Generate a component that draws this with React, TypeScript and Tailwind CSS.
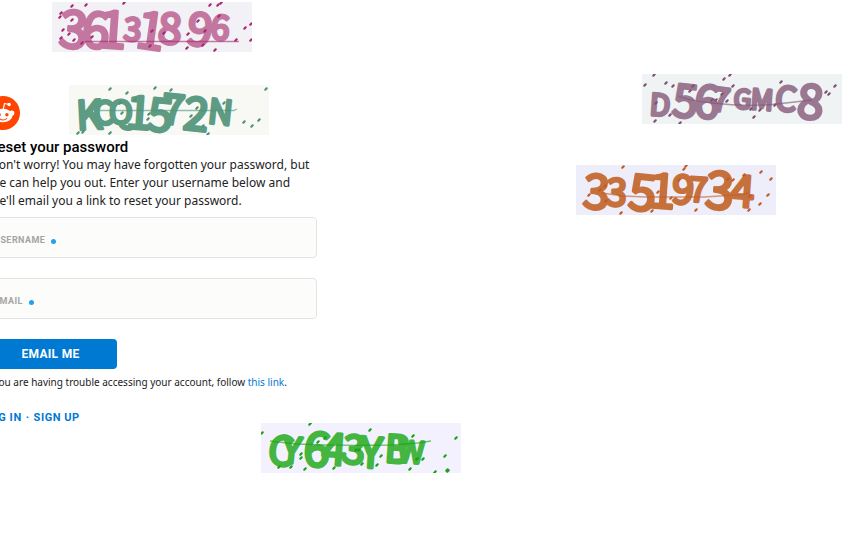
import React from "react";

type Glyph = [char: string, x: number, baseline: number, size: number, lean?: number];

interface ScribbleProps {
  label: string;
  place: string;
  background: string;
  ink: string;
  dot: string;
  glyphs: Glyph[];
  line: string;
  specks: [number, number][];
}

function Scribble({ label, place, background, ink, dot, glyphs, line, specks }: ScribbleProps) {
  return (
    <svg className={`absolute ${place}`} width="200" height="50" viewBox="0 0 200 50" role="img" aria-label={label}>
      <rect width="200" height="50" fill={background} />
      <g
        fill={ink}
        stroke={ink}
        strokeWidth="3"
        strokeLinejoin="round"
        fontFamily="'Noto Sans CJK JP', 'Liberation Sans', sans-serif"
        fontWeight="400"
      >
        {glyphs.map(([char, x, y, size, lean = 4], i) => (
          <text key={i} x={x} y={y} fontSize={size} transform={`rotate(${lean} ${x} ${y})`}>
            {char}
          </text>
        ))}
      </g>
      <path d={line} fill="none" stroke={dot} strokeOpacity="0.6" strokeWidth="1.3" />
      <g stroke={dot} strokeWidth="2.2" strokeLinecap="round">
        {specks.map(([x, y], i) => (
          <path key={i} d={`M${x - 0.7} ${y + 0.7}l1.4 -1.4`} />
        ))}
      </g>
    </svg>
  );
}

const scribbles: ScribbleProps[] = [
  {
    label: "Pink scribble",
    place: "left-[52px] top-[2px]",
    background: "#f2f1f6",
    ink: "#c377a0",
    dot: "#a52a70",
    glyphs: [["3", 6, 45, 52], ["6", 29, 45, 50], ["1", 45, 45, 52], ["3", 71, 38, 32], ["1", 82, 45, 52, 8], ["8", 105, 41, 43], ["9", 133, 42, 46, 8], ["6", 158, 37, 34]],
    line: "M33 39.5H187",
    specks: [[20, 4], [34, 3], [9, 11], [8, 15], [20, 18], [11, 28], [17, 32], [9, 36], [22, 38], [30, 41], [40, 35], [100, 29], [112, 31], [72, 1], [158, 3], [166, 3], [169, 1], [167, 14], [146, 19], [153, 29], [136, 32], [151, 43], [135, 46], [163, 48], [98, 44], [184, 38], [193, 26], [199, 22], [199, 38]],
  },
  {
    label: "Green scribble",
    place: "left-[69px] top-[85px]",
    background: "#f8f9f5",
    ink: "#5d9b83",
    dot: "#4a9378",
    glyphs: [["K", 8, 45, 40, -3], ["C", 25, 40, 32, -3], ["Q", 40, 39, 32, 0], ["1", 56, 43, 46], ["5", 77, 45, 46, 6], ["7", 91, 38, 42, 6], ["2", 113, 44, 46, 6], ["N", 138, 38, 34, 6]],
    line: "M30 25.5H165L168 24",
    specks: [[41, 4], [58, 8], [66, 15], [86, 3], [102, 5], [51, 18], [53, 28], [80, 29], [79, 34], [41, 48], [9, 48], [14, 47], [128, 23], [122, 31], [134, 41], [139, 49], [155, 18], [175, 37], [183, 41], [190, 35], [197, 4]],
  },
  {
    label: "Purple scribble",
    place: "left-[642px] top-[74px]",
    background: "#eff3f4",
    ink: "#9b7892",
    dot: "#805070",
    glyphs: [["D", 7, 41, 30], ["5", 29, 42, 46, 6], ["6", 51, 43, 46, 5], ["7", 68, 36, 33, 8], ["G", 91, 34, 26], ["M", 108, 35, 28], ["C", 132, 36, 34, 6], ["8", 154, 44, 48]],
    line: "M36 22Q48 27 70 29Q105 33 135 30L170 26",
    specks: [[3, 11], [12, 1], [24, 9], [31, 12], [51, 12], [14, 29], [28, 41], [13, 47], [38, 49], [48, 17], [82, 5], [88, 1], [91, 12], [80, 20], [85, 27], [70, 26], [74, 26], [109, 35], [118, 36], [112, 43], [133, 31], [139, 8], [184, 18], [187, 20], [193, 12]],
  },
  {
    label: "Orange scribble",
    place: "left-[576px] top-[165px]",
    background: "#eeedfa",
    ink: "#c6703c",
    dot: "#c15b27",
    glyphs: [["3", 6, 43, 48], ["3", 29, 40, 38], ["5", 51, 44, 50, 6], ["1", 72, 42, 48], ["9", 95, 38, 40], ["7", 112, 36, 34], ["3", 128, 43, 52], ["4", 153, 41, 44]],
    line: "M26 28L47 31L70 32H128L160 30L174 28",
    specks: [[47, 2], [24, 25], [29, 21], [13, 30], [30, 36], [45, 48], [76, 46], [82, 27], [95, 33], [103, 15], [108, 4], [110, 1], [120, 45], [152, 14], [157, 15], [168, 10], [174, 31], [173, 45], [184, 39], [192, 30], [195, 14], [185, 7]],
  },
  {
    label: "Bright green scribble",
    place: "left-[261px] top-[423px]",
    background: "#f2f1fd",
    ink: "#43b540",
    dot: "#18a018",
    glyphs: [["C", 6, 41, 40, 6], ["Y", 20, 39, 36, 6], ["6", 41, 42, 48, 6], ["4", 60, 41, 44], ["3", 81, 40, 40], ["Y", 98, 44, 42], ["B", 123, 39, 38], ["W", 136, 39, 30]],
    line: "M9 18L35 21Q80 23 130 22L157 20L170 18",
    specks: [[1, 10], [49, 1], [64, 15], [40, 31], [40, 35], [18, 44], [30, 44], [44, 46], [57, 19], [73, 45], [95, 27], [109, 7], [101, 41], [116, 42], [120, 33], [98, 27], [152, 13], [156, 36], [162, 36], [149, 46], [184, 33], [195, 15], [186, 47], [187, 48], [174, 49]],
  },
];

function Logo() {
  return (
    <svg className="-ml-0.5 size-[34px]" viewBox="0 0 20 20" role="img" aria-label="Reddit">
      <circle cx="10" cy="10" r="10" fill="#ff4500" />
      <g fill="white">
        <circle cx="4.8" cy="10" r="1.5" />
        <circle cx="15.2" cy="10" r="1.5" />
        <ellipse cx="10" cy="11.5" rx="5.6" ry="4" />
        <circle cx="13.6" cy="5" r="1" />
      </g>
      <path d="M10.1 8L10.9 4.4L13.4 4.9" fill="none" stroke="white" strokeWidth="0.7" strokeLinejoin="round" />
      <circle cx="7.7" cy="11" r="1" fill="#ff4500" />
      <circle cx="12.3" cy="11" r="1" fill="#ff4500" />
      <path d="M7.8 13.3Q10 14.9 12.2 13.3" fill="none" stroke="#ff4500" strokeWidth="0.6" strokeLinecap="round" />
    </svg>
  );
}

function Field({ id, label, type }: { id: string; label: string; type: string }) {
  return (
    <div className="relative h-[41px]">
      <input
        id={id}
        type={type}
        required
        className="h-full w-full rounded border border-[#e3e4e5] bg-[#fcfcfb] px-3 pt-3 text-sm outline-none focus:border-[#24a0ed]"
      />
      <label
        htmlFor={id}
        className="pointer-events-none absolute inset-y-0 left-1.5 flex items-center gap-1.5 pt-1.5 font-[Roboto,sans-serif] text-[9px] font-bold tracking-wider text-[#a5a4a4] uppercase"
      >
        {label}
        <span className="mt-0.5 size-[5px] rounded-full bg-[#24a0ed]" />
      </label>
    </div>
  );
}

export default function App() {
  return (
    <div className="relative min-h-screen overflow-hidden bg-white font-['Noto_Sans',sans-serif] text-[#222]">
      <main className="-ml-3 max-w-[329px] pt-24">
        <Logo />
        <h1 className="mt-2 font-[Roboto,sans-serif] text-[15px] leading-[18px] font-medium text-black">
          Reset your password
        </h1>
        <p className="pl-0.5 text-xs leading-[18px]">
          Don't worry! You may have forgotten your password, but we can help you out. Enter your username below and
          we'll email you a link to reset your password.
        </p>
        <form className="mt-[7px]" onSubmit={(e) => e.preventDefault()}>
          <div className="flex flex-col gap-5">
            <Field id="username" label="Username" type="text" />
            <Field id="email" label="Email" type="email" />
          </div>
          <button
            type="submit"
            className="mt-5 h-[30px] w-[129px] rounded bg-[#0079d3] pr-1 font-[Roboto,sans-serif] text-xs font-bold tracking-wide text-white"
          >
            EMAIL ME
          </button>
        </form>
        <div className="-ml-1">
          <p className="mt-[3px] text-[10px] leading-5 whitespace-nowrap">
            If you are having trouble accessing your account, follow{" "}
            <a href="#help" className="text-[#0079d3]">
              this link
            </a>
            .
          </p>
          <nav className="mt-4 flex gap-1 font-[Roboto,sans-serif] text-[11px] leading-5 font-bold tracking-wider text-[#0079d3]">
            <a href="#login">LOG IN</a>
            <span>·</span>
            <a href="#signup">SIGN UP</a>
          </nav>
        </div>
      </main>
      {scribbles.map((s) => (
        <Scribble key={s.label} {...s} />
      ))}
    </div>
  );
}
